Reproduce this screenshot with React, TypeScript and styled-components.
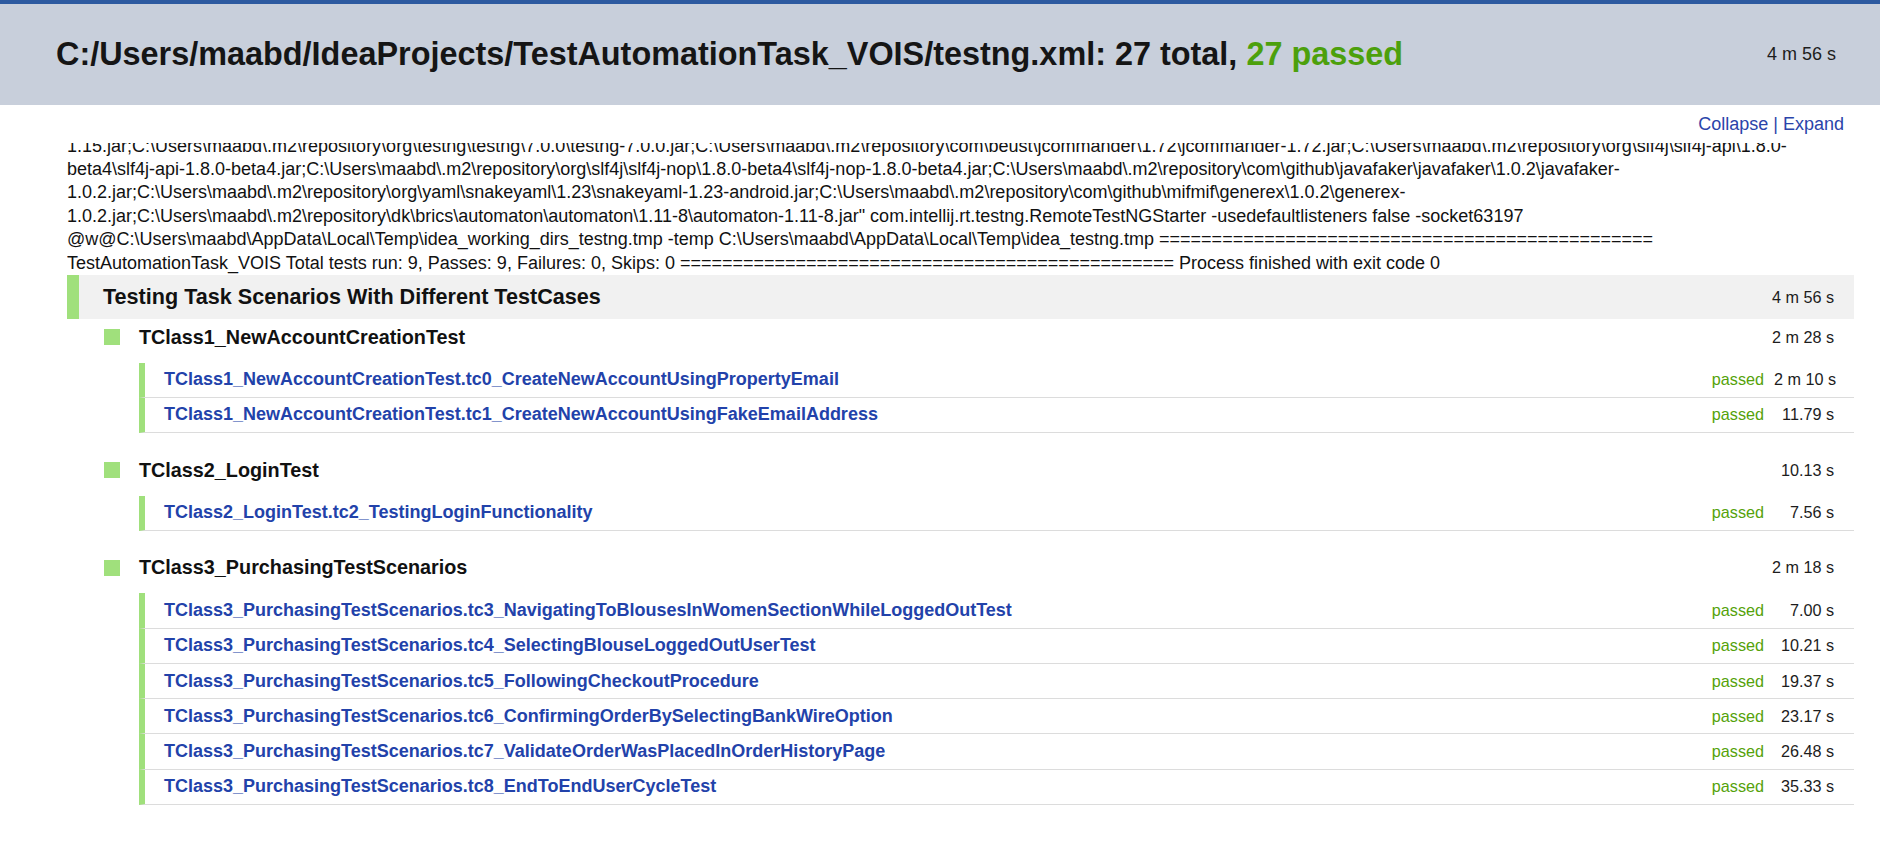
import React from "react";
import styled, { createGlobalStyle } from "styled-components";

const GlobalStyle = createGlobalStyle`
  html, body {
    margin: 0;
    padding: 0;
    background: #fff;
  }
  body {
    font-family: "Liberation Sans", Arial, sans-serif;
    font-size: 18px;
    color: #111;
  }
`;

const TopStripe = styled.div`
  height: 4px;
  background: #2d5aa0;
`;

const Header = styled.header`
  height: 101px;
  background: #c8cfdb;
  display: flex;
  align-items: center;
  justify-content: space-between;
  padding: 0 44px 0 56px;
`;

const Title = styled.h1`
  margin: 0;
  font-size: 32.4px;
  font-weight: bold;
  color: #151515;
`;

const Passed = styled.span`
  color: #4ca00c;
`;

const Time = styled.span<{ $large?: boolean }>`
  font-size: ${(p) => (p.$large ? "18px" : "16.2px")};
  color: #1d1d1d;
  white-space: nowrap;
`;

const Toolbar = styled.div`
  height: 38px;
  box-sizing: border-box;
  padding: 9px 36px 0 0;
  text-align: right;
  color: #2b44aa;
  a {
    color: #2b44aa;
    text-decoration: none;
  }
`;

const Output = styled.div`
  height: 132px;
  margin: 0 26px 0 67px;
  overflow: hidden;
  display: flex;
  flex-direction: column;
  justify-content: flex-end;
  line-height: 23.4px;
  color: #111;
`;

const OutputLine = styled.div`
  white-space: nowrap;
`;

const Suite = styled.section`
  margin: 0 26px 0 67px;
`;

const SuiteHeader = styled.div`
  height: 44px;
  box-sizing: border-box;
  background: #f1f1f1;
  border-left: 12px solid #a0e07c;
  padding: 0 20px 0 24px;
  display: flex;
  align-items: center;
  justify-content: space-between;
`;

const SuiteName = styled.h2`
  margin: 0;
  font-size: 21.6px;
  font-weight: bold;
`;

const ClassBlock = styled.div`
  margin-bottom: 19px;
`;

const ClassHeader = styled.div`
  height: 36px;
  display: flex;
  align-items: center;
  padding: 0 20px 0 37px;
`;

const Square = styled.span`
  width: 16px;
  height: 16px;
  background: #a0e07c;
  margin-right: 19px;
  flex: none;
`;

const ClassName = styled.h3`
  margin: 0;
  flex: 1;
  font-size: 19.8px;
  font-weight: bold;
`;

const Tests = styled.div`
  margin: 7.5px 0 0 72px;
`;

const TestRow = styled.div`
  display: flex;
  align-items: center;
  border-left: 6px solid #a0e07c;
  border-bottom: 1px solid #dcdcdc;
  padding: 6.65px 20px 6.65px 19px;
  line-height: 21px;
`;

const TestName = styled.a`
  flex: 1;
  font-weight: bold;
  color: #2242aa;
  text-decoration: none;
`;

const Status = styled.span`
  font-size: 16.2px;
  color: #55a20a;
`;

const TestTime = styled(Time)`
  width: 60px;
  margin-left: 10px;
  text-align: right;
`;

const EQ = "=".repeat(47);

const outputLines = [
  "1.15.jar;C:\\Users\\maabd\\.m2\\repository\\org\\testng\\testng\\7.0.0\\testng-7.0.0.jar;C:\\Users\\maabd\\.m2\\repository\\com\\beust\\jcommander\\1.72\\jcommander-1.72.jar;C:\\Users\\maabd\\.m2\\repository\\org\\slf4j\\slf4j-api\\1.8.0-",
  "beta4\\slf4j-api-1.8.0-beta4.jar;C:\\Users\\maabd\\.m2\\repository\\org\\slf4j\\slf4j-nop\\1.8.0-beta4\\slf4j-nop-1.8.0-beta4.jar;C:\\Users\\maabd\\.m2\\repository\\com\\github\\javafaker\\javafaker\\1.0.2\\javafaker-",
  "1.0.2.jar;C:\\Users\\maabd\\.m2\\repository\\org\\yaml\\snakeyaml\\1.23\\snakeyaml-1.23-android.jar;C:\\Users\\maabd\\.m2\\repository\\com\\github\\mifmif\\generex\\1.0.2\\generex-",
  "1.0.2.jar;C:\\Users\\maabd\\.m2\\repository\\dk\\brics\\automaton\\automaton\\1.11-8\\automaton-1.11-8.jar\" com.intellij.rt.testng.RemoteTestNGStarter -usedefaultlisteners false -socket63197",
  "@w@C:\\Users\\maabd\\AppData\\Local\\Temp\\idea_working_dirs_testng.tmp -temp C:\\Users\\maabd\\AppData\\Local\\Temp\\idea_testng.tmp " + EQ,
  "TestAutomationTask_VOIS Total tests run: 9, Passes: 9, Failures: 0, Skips: 0 " + EQ + " Process finished with exit code 0",
];

type TestCase = { name: string; time: string };
type TestClass = { name: string; time: string; tests: TestCase[] };

const classes: TestClass[] = [
  {
    name: "TClass1_NewAccountCreationTest",
    time: "2 m 28 s",
    tests: [
      { name: "tc0_CreateNewAccountUsingPropertyEmail", time: "2 m 10 s" },
      { name: "tc1_CreateNewAccountUsingFakeEmailAddress", time: "11.79 s" },
    ],
  },
  {
    name: "TClass2_LoginTest",
    time: "10.13 s",
    tests: [{ name: "tc2_TestingLoginFunctionality", time: "7.56 s" }],
  },
  {
    name: "TClass3_PurchasingTestScenarios",
    time: "2 m 18 s",
    tests: [
      { name: "tc3_NavigatingToBlousesInWomenSectionWhileLoggedOutTest", time: "7.00 s" },
      { name: "tc4_SelectingBlouseLoggedOutUserTest", time: "10.21 s" },
      { name: "tc5_FollowingCheckoutProcedure", time: "19.37 s" },
      { name: "tc6_ConfirmingOrderBySelectingBankWireOption", time: "23.17 s" },
      { name: "tc7_ValidateOrderWasPlacedInOrderHistoryPage", time: "26.48 s" },
      { name: "tc8_EndToEndUserCycleTest", time: "35.33 s" },
    ],
  },
];

export default function App() {
  return (
    <>
      <GlobalStyle />
      <TopStripe />
      <Header>
        <Title>
          C:/Users/maabd/IdeaProjects/TestAutomationTask_VOIS/testng.xml: 27 total,{" "}
          <Passed>27 passed</Passed>
        </Title>
        <Time $large>4 m 56 s</Time>
      </Header>
      <Toolbar>
        <a href="#">Collapse</a> | <a href="#">Expand</a>
      </Toolbar>
      <Output>
        {outputLines.map((line, i) => (
          <OutputLine key={i}>{line}</OutputLine>
        ))}
      </Output>
      <Suite>
        <SuiteHeader>
          <SuiteName>Testing Task Scenarios With Different TestCases</SuiteName>
          <Time>4 m 56 s</Time>
        </SuiteHeader>
        {classes.map((cls) => (
          <ClassBlock key={cls.name}>
            <ClassHeader>
              <Square />
              <ClassName>{cls.name}</ClassName>
              <Time>{cls.time}</Time>
            </ClassHeader>
            <Tests>
              {cls.tests.map((t) => (
                <TestRow key={t.name}>
                  <TestName href="#">
                    {cls.name}.{t.name}
                  </TestName>
                  <Status>passed</Status>
                  <TestTime>{t.time}</TestTime>
                </TestRow>
              ))}
            </Tests>
          </ClassBlock>
        ))}
      </Suite>
    </>
  );
}
